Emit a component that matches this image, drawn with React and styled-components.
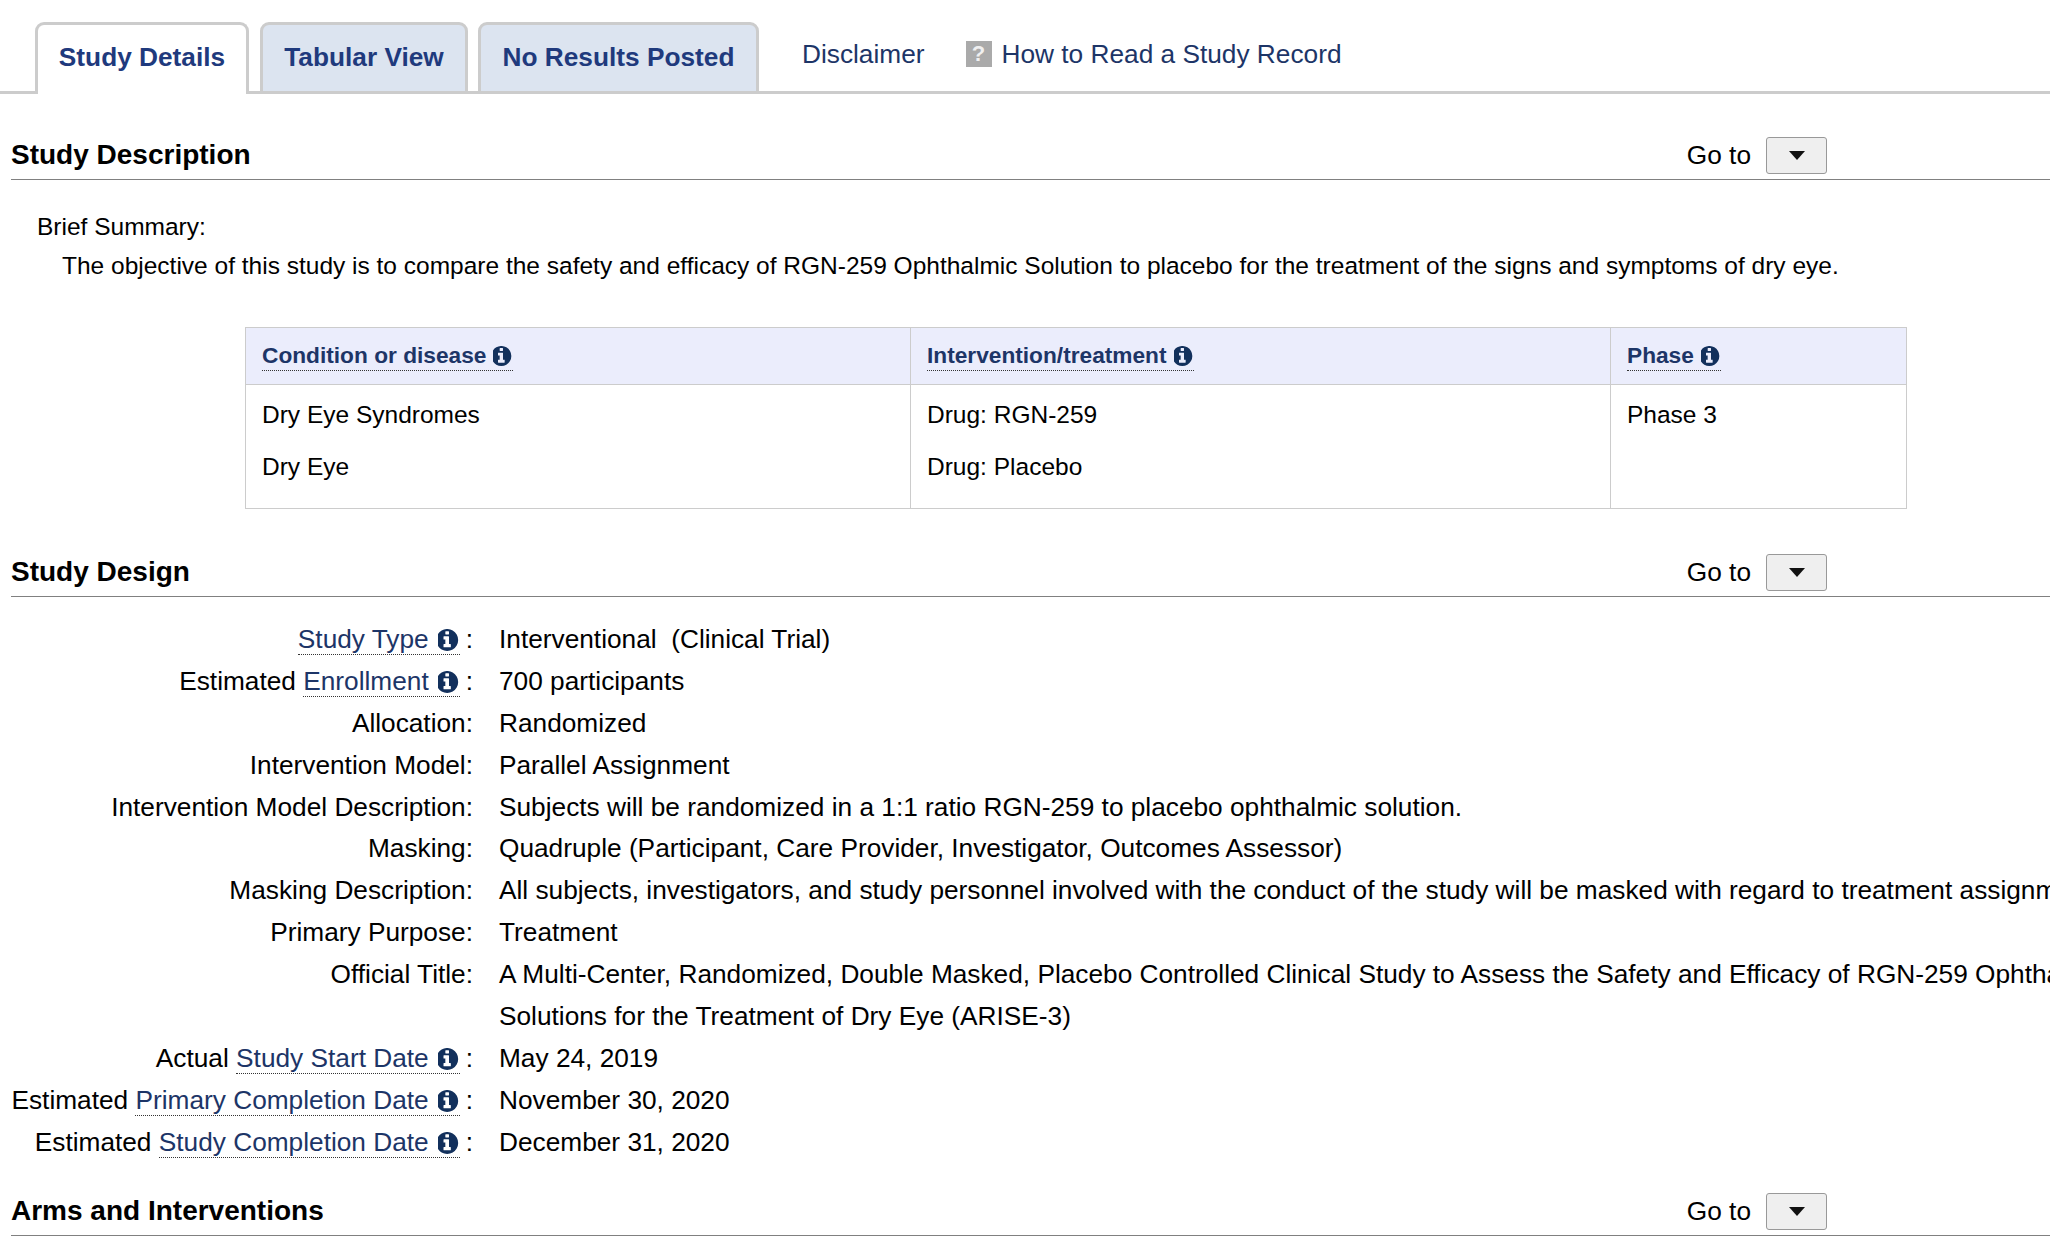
import React from 'react'
import styled, { createGlobalStyle } from 'styled-components'

const Global = createGlobalStyle`
  html, body {
    margin: 0;
    padding: 0;
    background: #fff;
    overflow: hidden;
  }
  body {
    font-family: "Liberation Sans", Arial, sans-serif;
    font-size: 26.25px;
    color: #000;
  }
`

const Page = styled.div`
  width: 2050px;
  height: 1249px;
  overflow: hidden;
`

const TabBar = styled.nav`
  display: flex;
  align-items: flex-end;
  height: 91px;
  padding-left: 35px;
  border-bottom: 3px solid #ccc;
`

const Tab = styled.a`
  box-sizing: border-box;
  display: flex;
  align-items: center;
  justify-content: center;
  width: ${p => p.$w}px;
  height: 72px;
  margin-right: ${p => p.$gap || 0}px;
  padding-bottom: ${p => (p.$active ? 4 : 1)}px;
  border: 3px solid #ccc;
  border-bottom: ${p => (p.$active ? 'none' : '3px solid #ccc')};
  border-radius: 9px 9px 0 0;
  background: ${p => (p.$active ? '#fff' : '#dce4f0')};
  color: #1f3a7d;
  font-size: 26.25px;
  font-weight: bold;
  position: relative;
  top: 3px;
`

const TabLink = styled.a`
  display: flex;
  align-items: center;
  align-self: flex-start;
  height: 26px;
  margin-top: 41px;
  margin-left: ${p => p.$left}px;
  color: #1d3567;
  font-size: 26.25px;
`

const HelpIcon = styled.span`
  display: flex;
  align-items: center;
  justify-content: center;
  width: 26px;
  height: 26px;
  margin-right: 10px;
  background: #aaa;
  color: #f0f0f0;
  font-size: 22px;
  font-weight: bold;
`

const SectionHead = styled.div`
  box-sizing: border-box;
  display: flex;
  align-items: center;
  justify-content: space-between;
  height: 49px;
  margin-top: ${p => p.$top}px;
  margin-left: 11px;
  padding-right: 223px;
  border-bottom: 1px solid #808080;
`

const SectionTitle = styled.h2`
  margin: 0;
  font-size: 28px;
  font-weight: bold;
  color: #000;
`

const GoTo = styled.div`
  display: flex;
  align-items: center;
  gap: 15px;
  font-size: 26.25px;
`

const GoButton = styled.button`
  box-sizing: border-box;
  display: flex;
  align-items: center;
  justify-content: center;
  width: 61px;
  height: 37px;
  padding: 0;
  background: #efefef;
  border: 1px solid #999;
  border-radius: 3px;
`

const Caret = styled.span`
  width: 0;
  height: 0;
  border-left: 8.5px solid transparent;
  border-right: 8.5px solid transparent;
  border-top: 9px solid #111;
`

const Summary = styled.div`
  margin-top: 27px;
  padding-left: 37px;
  font-size: 24.5px;
  line-height: 39px;
`

const SummaryText = styled.div`
  padding-left: 25px;
  white-space: nowrap;
`

const ArmsTable = styled.table`
  width: 1661px;
  margin: 42px 0 0 245px;
  border-collapse: collapse;
  table-layout: fixed;
`

const HeadCell = styled.th`
  box-sizing: border-box;
  width: ${p => p.$w}px;
  height: 57px;
  padding: 0 16px 2px;
  background: #ebedfc;
  border: 1px solid #ccc;
  text-align: left;
  font-size: 22.7px;
  font-weight: bold;
  color: #1b3358;
`

const BodyCell = styled.td`
  height: 119px;
  padding: 4px 16px 0;
  border: 1px solid #ccc;
  font-size: 24.5px;
  vertical-align: top;
`

const CellItem = styled.div`
  height: 52px;
  line-height: 52px;
`

const Tip = styled.span`
  display: inline-block;
  line-height: 30px;
  border-bottom: 1px dotted #333;
  color: #1d3567;
  white-space: nowrap;
`

const InfoSvg = styled.svg`
  width: ${p => p.$size}px;
  height: ${p => p.$size}px;
  margin-left: ${p => p.$gap}px;
  fill: #12305c;
  vertical-align: -3px;
`

const InfoIcon = ({ size, gap }) => (
  <InfoSvg $size={size} $gap={gap} viewBox="128 128 1536 1536">
    <path d="M1024 1375v-160q0-14-9-23t-23-9h-96v-512q0-14-9-23t-23-9h-320q-14 0-23 9t-9 23v160q0 14 9 23t23 9h96v320h-96q-14 0-23 9t-9 23v160q0 14 9 23t23 9h448q14 0 23-9t9-23zm-128-896v-160q0-14-9-23t-23-9h-192q-14 0-23 9t-9 23v160q0 14 9 23t23 9h192q14 0 23-9t9-23zm640 416q0 209-103 385.5t-279.5 279.5-385.5 103-385.5-103-279.5-279.5-103-385.5 103-385.5 279.5-279.5 385.5-103 385.5 103 279.5 279.5 103 385.5z" />
  </InfoSvg>
)

const Rows = styled.dl`
  display: grid;
  grid-template-columns: 462px 1fr;
  grid-auto-rows: 41.9px;
  column-gap: 26px;
  margin: 22px 0 0 11px;
  line-height: 41.9px;
`

const Label = styled.dt`
  text-align: right;
  white-space: nowrap;
`

const Value = styled.dd`
  margin: 0;
  white-space: nowrap;
`

const Colon = styled.span`
  margin-left: 6px;
`

const Linked = ({ pre, text }) => (
  <>
    {pre && `${pre} `}
    <Tip>{text}<InfoIcon size={22} gap={9} /></Tip>
    <Colon>:</Colon>
  </>
)

const HeadTip = ({ text }) => (
  <Tip>{text}<InfoIcon size={20} gap={7} /></Tip>
)

const Section = ({ title, top }) => (
  <SectionHead $top={top}>
    <SectionTitle>{title}</SectionTitle>
    <GoTo>
      Go to
      <GoButton><Caret /></GoButton>
    </GoTo>
  </SectionHead>
)

const design = [
  [<Linked text="Study Type" />, 'Interventional \u00a0(Clinical Trial)'],
  [<Linked pre="Estimated" text="Enrollment" />, '700 participants'],
  ['Allocation:', 'Randomized'],
  ['Intervention Model:', 'Parallel Assignment'],
  ['Intervention Model Description:', 'Subjects will be randomized in a 1:1 ratio RGN-259 to placebo ophthalmic solution.'],
  ['Masking:', 'Quadruple (Participant, Care Provider, Investigator, Outcomes Assessor)'],
  ['Masking Description:', 'All subjects, investigators, and study personnel involved with the conduct of the study will be masked with regard to treatment assignment.'],
  ['Primary Purpose:', 'Treatment'],
  ['Official Title:', 'A Multi-Center, Randomized, Double Masked, Placebo Controlled Clinical Study to Assess the Safety and Efficacy of RGN-259 Ophthalmic'],
  ['', 'Solutions for the Treatment of Dry Eye (ARISE-3)'],
  [<Linked pre="Actual" text="Study Start Date" />, 'May 24, 2019'],
  [<Linked pre="Estimated" text="Primary Completion Date" />, 'November 30, 2020'],
  [<Linked pre="Estimated" text="Study Completion Date" />, 'December 31, 2020'],
]

export default function App() {
  return (
    <Page>
      <Global />
      <TabBar>
        <Tab $active $w={214} $gap={11}>Study Details</Tab>
        <Tab $w={208} $gap={10}>Tabular View</Tab>
        <Tab $w={281}>No Results Posted</Tab>
        <TabLink $left={43}>Disclaimer</TabLink>
        <TabLink $left={41}><HelpIcon>?</HelpIcon>How to Read a Study Record</TabLink>
      </TabBar>

      <Section title="Study Description" top={37} />
      <Summary>
        Brief Summary:
        <SummaryText>
          The objective of this study is to compare the safety and efficacy of RGN-259 Ophthalmic Solution to placebo for the treatment of the signs and symptoms of dry eye.
        </SummaryText>
      </Summary>

      <ArmsTable>
        <thead>
          <tr>
            <HeadCell $w={665}><HeadTip text="Condition or disease" /></HeadCell>
            <HeadCell $w={700}><HeadTip text="Intervention/treatment" /></HeadCell>
            <HeadCell $w={296}><HeadTip text="Phase" /></HeadCell>
          </tr>
        </thead>
        <tbody>
          <tr>
            <BodyCell><CellItem>Dry Eye Syndromes</CellItem><CellItem>Dry Eye</CellItem></BodyCell>
            <BodyCell><CellItem>Drug: RGN-259</CellItem><CellItem>Drug: Placebo</CellItem></BodyCell>
            <BodyCell><CellItem>Phase 3</CellItem></BodyCell>
          </tr>
        </tbody>
      </ArmsTable>

      <Section title="Study Design" top={39} />
      <Rows>
        {design.map(([label, value], i) => (
          <React.Fragment key={i}>
            <Label>{label}</Label>
            <Value>{value}</Value>
          </React.Fragment>
        ))}
      </Rows>

      <Section title="Arms and Interventions" top={23.5} />
    </Page>
  )
}
